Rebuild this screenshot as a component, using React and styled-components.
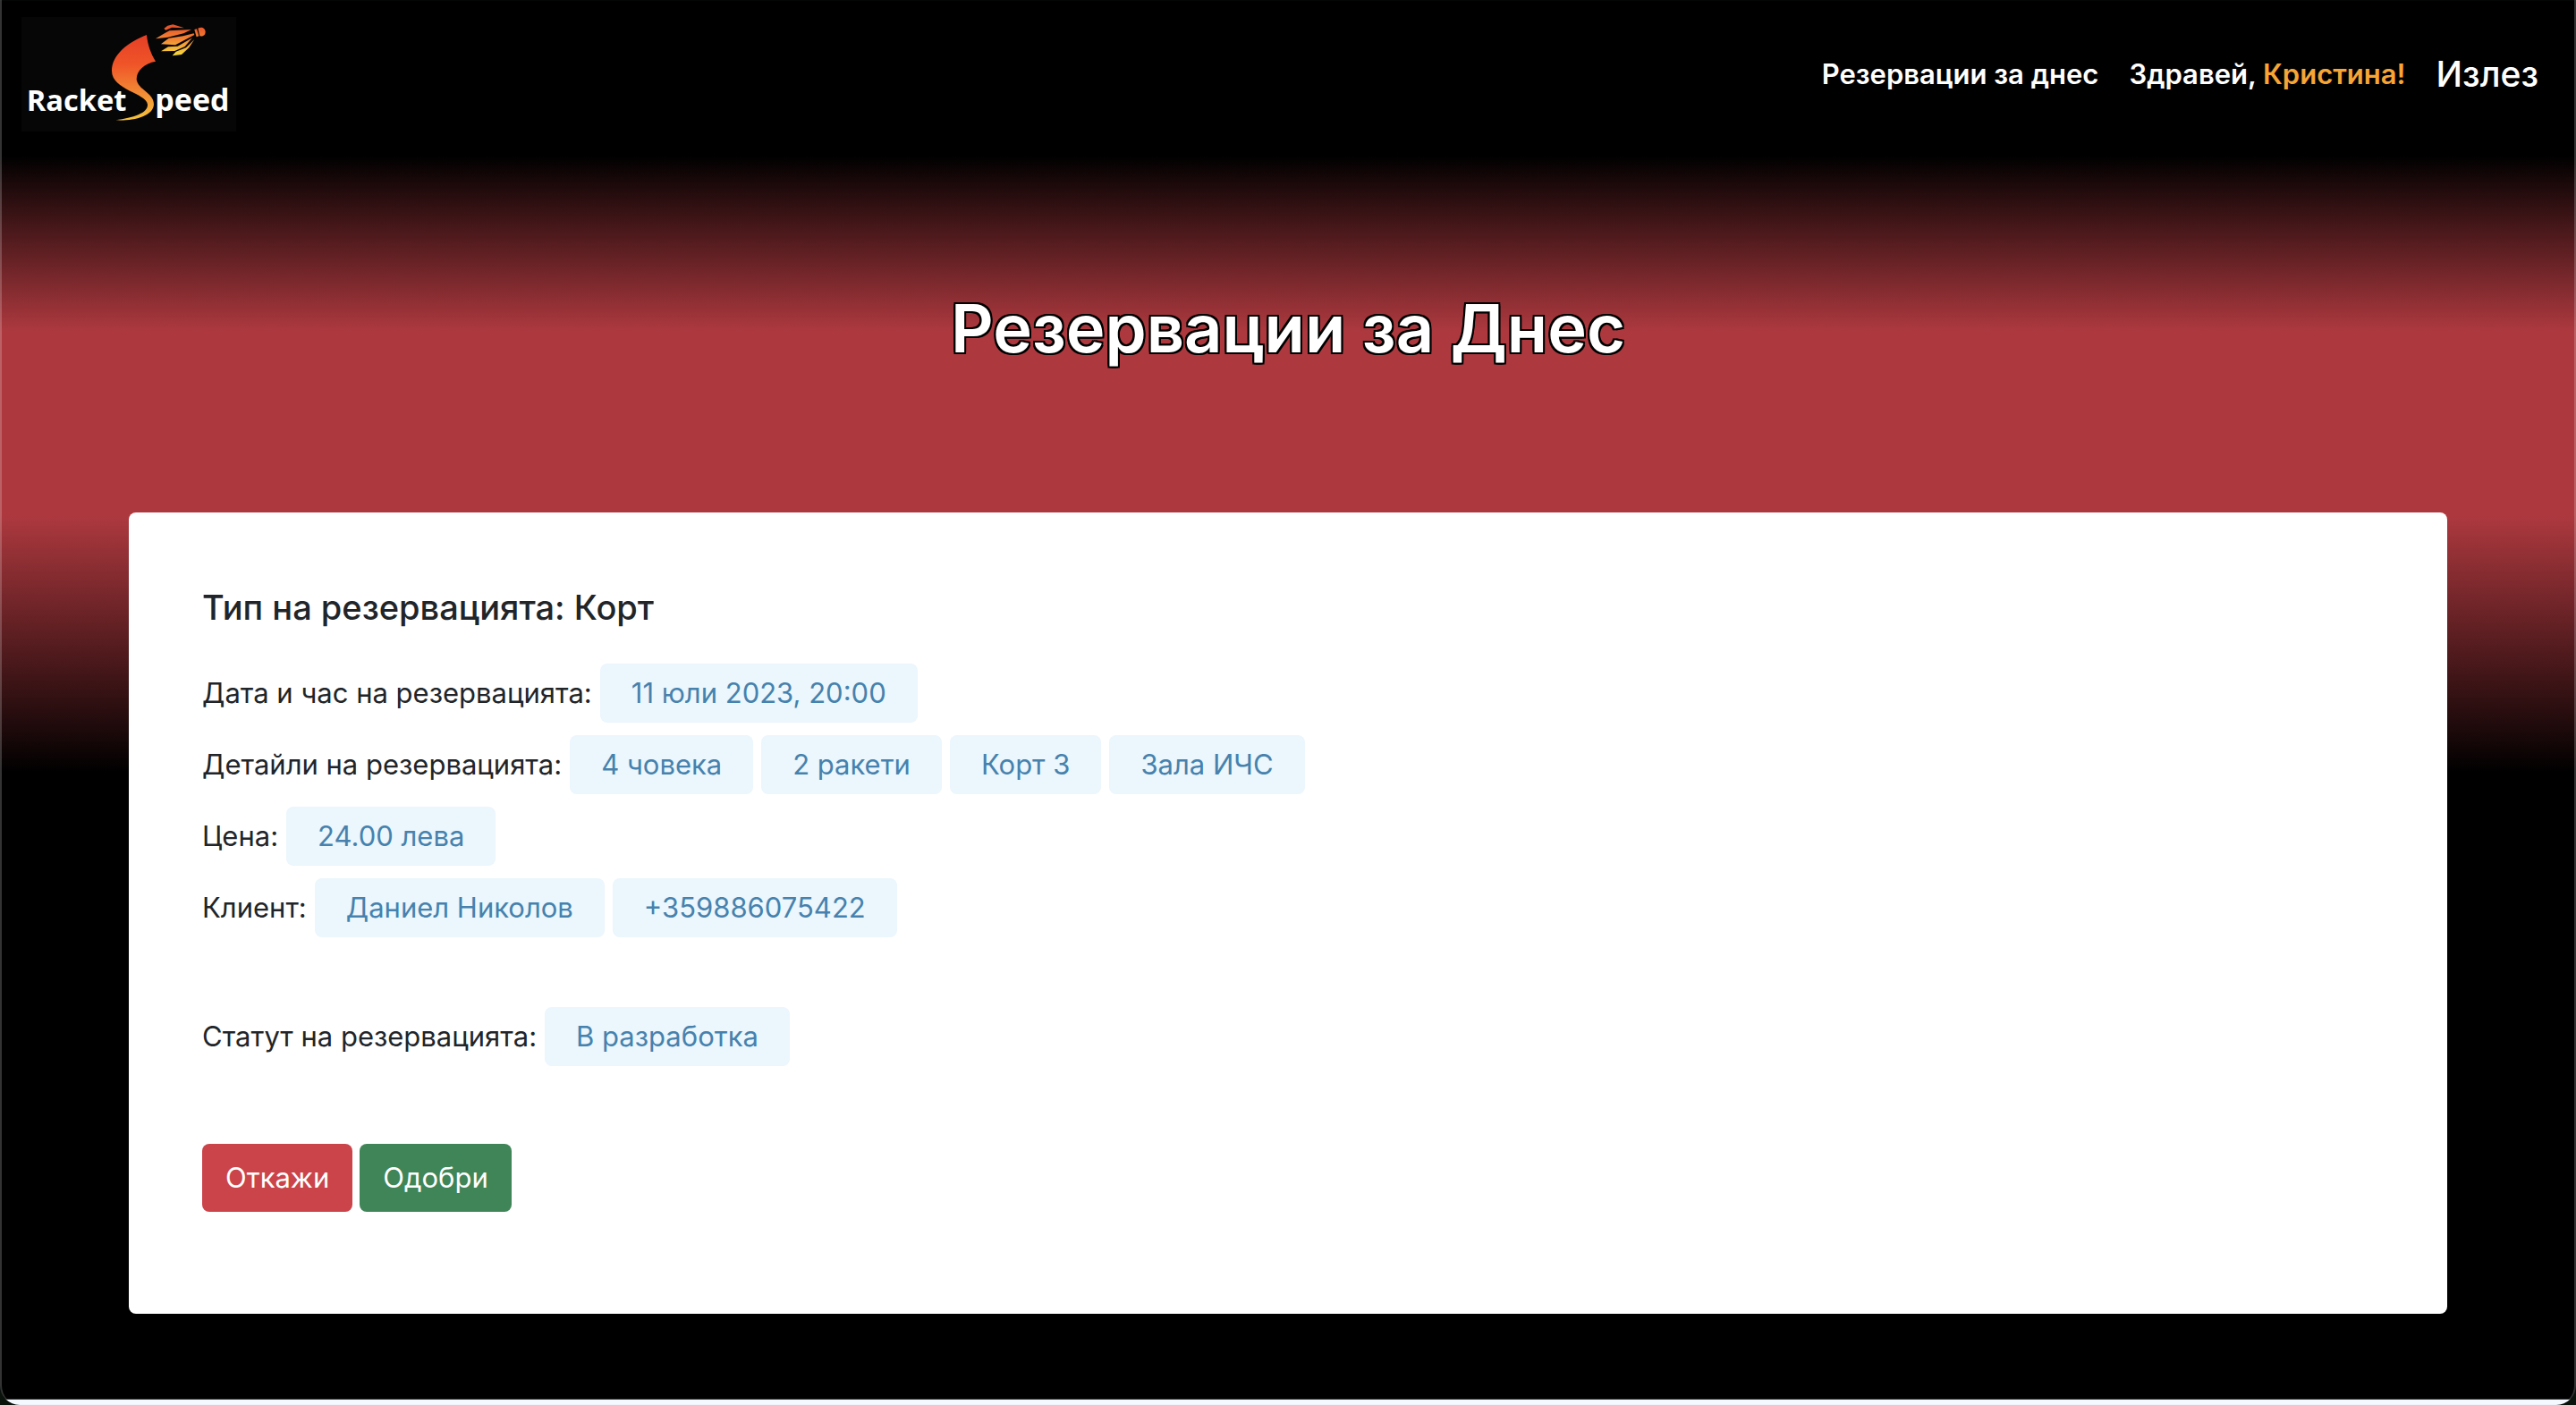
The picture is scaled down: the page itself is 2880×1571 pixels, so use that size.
import React from "react";
import styled, { createGlobalStyle } from "styled-components";

const GlobalStyle = createGlobalStyle`
  *, *::before, *::after { box-sizing: border-box; }
  body {
    margin: 0;
    background: #0a120c;
    color: #212529;
    font-family: Inter, "Liberation Sans", sans-serif;
    font-size: 31px;
    line-height: 48px;
  }
`;

const Page = styled.div`
  min-height: 100vh;
  padding-bottom: 102px;
  border: solid rgba(255, 255, 255, 0.2);
  border-width: 0 2px;
  border-radius: 0 0 22px 22px;
  background: linear-gradient(
    #000 174px,
    #ad393f 371px,
    #ad393f 576px,
    #000 864px,
    #000 calc(100% - 6px),
    #f4f9ff calc(100% - 6px)
  );
`;

const Header = styled.header`
  display: flex;
  align-items: center;
  justify-content: space-between;
  padding: 19px 40px 19px 22px;
`;

const LogoLink = styled.a`
  display: block;
`;

const LogoImage = styled.svg`
  display: block;
  width: 240px;
  height: 128px;
  background: #060606;
  font-family: "Open Sans", sans-serif;
  font-weight: 700;
`;

const Nav = styled.nav`
  display: flex;
  align-items: center;
  gap: 34px;
  color: #fff;
  font-weight: 600;
`;

const NavLink = styled.a`
  color: inherit;
  text-decoration: none;
`;

const UserName = styled.span`
  color: #f7a535;
`;

const LogoutButton = styled.button`
  padding: 0;
  border: 0;
  background: none;
  color: #fff;
  font: inherit;
  font-size: 39px;
  font-weight: 500;
`;

const Title = styled.h1`
  margin: 152px 0 157px;
  color: #fff;
  font-size: 74px;
  font-weight: 600;
  line-height: 98px;
  text-align: center;
  text-shadow:
    -2px -2px 0 #000, 2px -2px 0 #000, -2px 2px 0 #000, 2px 2px 0 #000,
    0 -2px 0 #000, 0 2px 0 #000, -2px 0 0 #000, 2px 0 0 #000;
`;

const Card = styled.article`
  margin: 0 142px;
  padding: 82px;
  border-radius: 8px;
  background: #fff;
`;

const CardTitle = styled.h2`
  margin: 0 0 39px;
  font-size: 38px;
  font-weight: 500;
  line-height: 48px;
`;

const Details = styled.dl`
  display: flex;
  flex-direction: column;
  gap: 14px;
  margin: 0;
`;

const Row = styled.div`
  display: flex;
  flex-wrap: wrap;
  align-items: center;
  gap: 9px;
  margin-top: ${(p) => (p.$spaced ? "64px" : "0")};
`;

const Label = styled.dt``;

const Pill = styled.dd`
  margin: 0;
  padding: 9px 35px;
  border-radius: 8px;
  background: #ebf6fd;
  color: #4682ad;
`;

const Actions = styled.div`
  display: flex;
  gap: 8px;
  padding: 87px 0 32px;
`;

const ActionButton = styled.button`
  padding: 14px 26px;
  border: 0;
  border-radius: 8px;
  background: ${(p) => (p.$danger ? "#cb444a" : "#408558")};
  color: #fff;
  font: inherit;
`;

const details = [
  { label: "Дата и час на резервацията:", values: ["11 юли 2023, 20:00"] },
  { label: "Детайли на резервацията:", values: ["4 човека", "2 ракети", "Корт 3", "Зала ИЧС"] },
  { label: "Цена:", values: ["24.00 лева"] },
  { label: "Клиент:", values: ["Даниел Николов", "+359886075422"] },
  { label: "Статут на резервацията:", values: ["В разработка"], spaced: true },
];

function Logo() {
  return (
    <LogoImage viewBox="72 57 720 384" role="img" aria-label="RacketSpeed">
      <defs>
        <linearGradient id="swoosh" x1="0" y1="0" x2="0" y2="1">
          <stop offset="0" stopColor="#e63f26" />
          <stop offset="0.35" stopColor="#ef5528" />
          <stop offset="0.68" stopColor="#f28b35" />
          <stop offset="1" stopColor="#f5c43c" />
        </linearGradient>
        <linearGradient id="shuttle" gradientUnits="userSpaceOnUse" x1="0" y1="82" x2="0" y2="188">
          <stop offset="0" stopColor="#e84a26" />
          <stop offset="0.5" stopColor="#f38a35" />
          <stop offset="1" stopColor="#f6df3c" />
        </linearGradient>
      </defs>
      <path
        fill="url(#swoosh)"
        d="M492 117 C495 150 506 180 522 206 C484 213 458 236 458 266 C463 302 516 310 516 350 C514 390 448 406 388 403 C446 394 497 380 495 350 C490 312 375 302 375 238 C375 182 432 140 492 117Z"
      />
      <g fill="url(#shuttle)">
        <path d="M550 96 L562 86 L580 82 L618 94 L576 92 L556 101Z" />
        <path d="M522 130 L548 114 L568 103 L642 99 L616 112 L562 125Z" />
        <path d="M540 148 L566 128 L614 121 L650 112 L652 117 L608 140 L588 151Z" />
        <path d="M540 172 L564 157 L596 155 L645 127 L620 156 L586 171Z" />
        <path d="M578 187 L590 173 L624 160 L652 132 L634 160 L609 183Z" />
        <path d="M664 95 C676 88 689 95 689 107 C689 118 680 123 670 121Z" />
        <path d="M652 99 L660 97 L667 121 L659 124Z" />
      </g>
      <text x="89" y="373" fontSize="98" fill="#fff">Racket</text>
      <text x="520" y="373" fontSize="102" fill="#fff">peed</text>
    </LogoImage>
  );
}

export default function App() {
  return (
    <>
      <GlobalStyle />
      <Page>
        <Header>
          <LogoLink href="#home">
            <Logo />
          </LogoLink>
          <Nav>
            <NavLink href="#reservations">Резервации за днес</NavLink>
            <NavLink href="#profile">
              Здравей, <UserName>Кристина!</UserName>
            </NavLink>
            <LogoutButton type="button">Излез</LogoutButton>
          </Nav>
        </Header>
        <main>
          <Title>Резервации за Днес</Title>
          <Card>
            <CardTitle>Тип на резервацията: Корт</CardTitle>
            <Details>
              {details.map(({ label, values, spaced }) => (
                <Row key={label} $spaced={spaced}>
                  <Label>{label}</Label>
                  {values.map((value) => (
                    <Pill key={value}>{value}</Pill>
                  ))}
                </Row>
              ))}
            </Details>
            <Actions>
              <ActionButton type="button" $danger>Откажи</ActionButton>
              <ActionButton type="button">Одобри</ActionButton>
            </Actions>
          </Card>
        </main>
      </Page>
    </>
  );
}
